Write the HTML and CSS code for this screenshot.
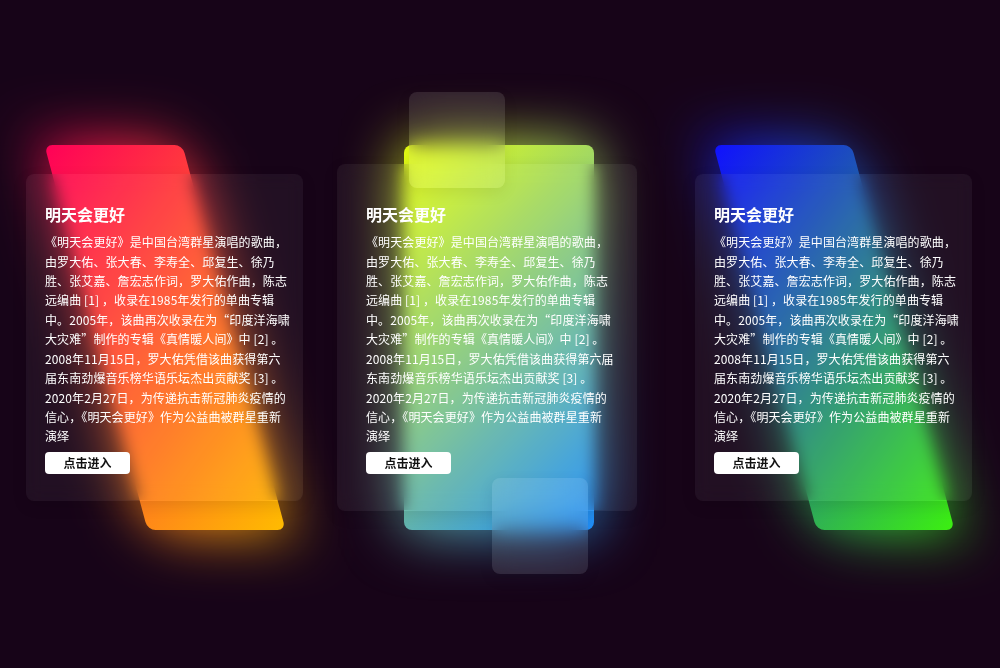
FILE: index.html
```html
<!DOCTYPE html>
<html lang="zh-CN">
<head>
<meta charset="utf-8">
<title>明天会更好</title>
<link rel="stylesheet" href="styles.css">
</head>
<body>
<div class="container">
  <div class="box box-red">
    <div class="glow"></div>
    <div class="shape"></div>
    <div class="content">
      <h2 class="title">明天会更好</h2>
      <p class="text">《明天会更好》是中国台湾群星演唱的歌曲，<br>由罗大佑、张大春、李寿全、邱复生、徐乃<br>胜、张艾嘉、詹宏志作词，罗大佑作曲，陈志<br>远编曲 [1] ，收录在1985年发行的单曲专辑<br>中。2005年，该曲再次收录在为“印度洋海啸<br>大灾难”制作的专辑《真情暖人间》中 [2] 。<br>2008年11月15日，罗大佑凭借该曲获得第六<br>届东南劲爆音乐榜华语乐坛杰出贡献奖 [3] 。<br>2020年2月27日，为传递抗击新冠肺炎疫情的<br>信心，《明天会更好》作为公益曲被群星重新<br>演绎</p>
      <a class="btn" href="#">点击进入</a>
    </div>
  </div>
  <div class="box box-green is-active">
    <div class="glow"></div>
    <div class="shape"></div>
    <div class="content">
      <h2 class="title">明天会更好</h2>
      <p class="text">《明天会更好》是中国台湾群星演唱的歌曲，<br>由罗大佑、张大春、李寿全、邱复生、徐乃<br>胜、张艾嘉、詹宏志作词，罗大佑作曲，陈志<br>远编曲 [1] ，收录在1985年发行的单曲专辑<br>中。2005年，该曲再次收录在为“印度洋海啸<br>大灾难”制作的专辑《真情暖人间》中 [2] 。<br>2008年11月15日，罗大佑凭借该曲获得第六届<br>东南劲爆音乐榜华语乐坛杰出贡献奖 [3] 。<br>2020年2月27日，为传递抗击新冠肺炎疫情的<br>信心，《明天会更好》作为公益曲被群星重新<br>演绎</p>
      <a class="btn" href="#">点击进入</a>
    </div>
    <span class="glass glass-top"></span>
    <span class="glass glass-bottom"></span>
  </div>
  <div class="box box-blue">
    <div class="glow"></div>
    <div class="shape"></div>
    <div class="content">
      <h2 class="title">明天会更好</h2>
      <p class="text">《明天会更好》是中国台湾群星演唱的歌曲，<br>由罗大佑、张大春、李寿全、邱复生、徐乃<br>胜、张艾嘉、詹宏志作词，罗大佑作曲，陈志<br>远编曲 [1] ，收录在1985年发行的单曲专辑<br>中。2005年，该曲再次收录在为“印度洋海啸<br>大灾难”制作的专辑《真情暖人间》中 [2] 。<br>2008年11月15日，罗大佑凭借该曲获得第六<br>届东南劲爆音乐榜华语乐坛杰出贡献奖 [3] 。<br>2020年2月27日，为传递抗击新冠肺炎疫情的<br>信心，《明天会更好》作为公益曲被群星重新<br>演绎</p>
      <a class="btn" href="#">点击进入</a>
    </div>
  </div>
</div>
</body>
</html>
```
FILE: styles.css
```css
* {
  box-sizing: border-box;
}
html, body {
  margin: 0;
  padding: 0;
}
body {
  width: 1000px;
  height: 668px;
  overflow: hidden;
  background: #170418;
  font-family: "Microsoft YaHei", "Noto Sans CJK SC", "Noto Sans", sans-serif;
}
.container {
  display: flex;
  gap: 54.5px;
  padding: 145px 0 0 24.5px;
}
.box {
  position: relative;
  width: 280px;
  height: 385px;
  flex: none;
  display: flex;
  justify-content: center;
  align-items: center;
}
.shape,
.glow {
  position: absolute;
  top: 0;
  left: 71px;
  width: 138px;
  height: 100%;
  border-radius: 8px;
  transform: skewX(15deg);
}
.glow {
  filter: blur(30px);
}
.box-red .shape,
.box-red .glow {
  background: linear-gradient(315deg, #ffbc00, #ff0058);
}
.box-green .shape,
.box-green .glow {
  background: linear-gradient(315deg, #1e8fff, #e8ff10);
}
.box-blue .shape,
.box-blue .glow {
  background: linear-gradient(315deg, #3cf010, #1010ff);
}
.is-active .shape,
.is-active .glow {
  transform: none;
  left: 45px;
  width: 190px;
}
.content {
  position: relative;
  z-index: 1;
  flex: none;
  width: 277px;
  padding: 30px 19px 27px;
  background: rgba(255, 255, 255, 0.05);
  backdrop-filter: blur(8px);
  -webkit-backdrop-filter: blur(8px);
  box-shadow: 0 5px 15px rgba(0, 0, 0, 0.1);
  border-radius: 8px;
  color: #fff;
}
.is-active .content {
  left: -12px;
  width: 300px;
  padding: 40px 29px 37px;
}
.title {
  margin: 0 0 8px;
  font-size: 16px;
  line-height: 20px;
  font-weight: bold;
}
.text {
  margin: 0 0 6px;
  font-size: 12px;
  line-height: 19.4px;
  white-space: nowrap;
  letter-spacing: 0.1px;
}
.btn {
  display: block;
  width: 85px;
  height: 22px;
  line-height: 22px;
  text-align: center;
  background: #fff;
  color: #111;
  border-radius: 4px;
  font-size: 12px;
  font-weight: bold;
  text-decoration: none;
}
.glass {
  position: absolute;
  z-index: 5;
  width: 96px;
  height: 96px;
  border-radius: 8px;
  background: rgba(255, 255, 255, 0.1);
  backdrop-filter: blur(10px);
  -webkit-backdrop-filter: blur(10px);
  box-shadow: 0 5px 15px rgba(0, 0, 0, 0.08);
}
.glass-top {
  top: -53px;
  left: 50px;
}
.glass-bottom {
  top: 333px;
  left: 133px;
}
```
